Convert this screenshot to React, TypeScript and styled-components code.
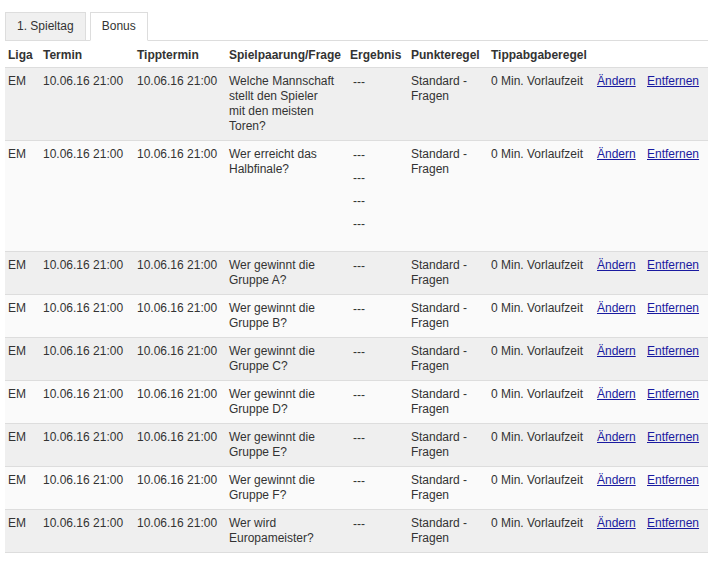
import styled, { createGlobalStyle } from 'styled-components';

const GlobalStyle = createGlobalStyle`
    body {
        margin: 0;
        background: #fff;
        font-family: "Liberation Sans", Arial, sans-serif;
        font-size: 12px;
        color: #333;
    }
`

const Page = styled.div`
    padding: 12px 0 0 5px;
    width: 703px;
`

const TabBar = styled.div`
    display: flex;
    gap: 4px;
    border-bottom: 1px solid #ddd;
`

const Tab = styled.div<{ $active?: boolean }>`
    line-height: 27px;
    padding: 0 11px;
    border: 1px solid #ddd;
    margin-bottom: -1px;
    background: ${p => p.$active ? '#fff' : '#f0f0f0'};
    border-bottom-color: ${p => p.$active ? '#fff' : '#ddd'};
    cursor: pointer;
`

const Table = styled.table`
    width: 703px;
    table-layout: fixed;
    border-collapse: collapse;
    line-height: 15px;
`

const HeadCell = styled.th`
    text-align: left;
    font-weight: bold;
    padding: 7px 3px 4px;
    white-space: nowrap;
    border-bottom: 1px solid #ddd;
`

const Row = styled.tr<{ $odd: boolean }>`
    background: ${p => p.$odd ? '#efefef' : '#fafafa'};
    border-bottom: 1px solid #ddd;
`

const Cell = styled.td<{ $nowrap?: boolean; $padRight?: number }>`
    vertical-align: top;
    padding: 6px ${p => p.$padRight ?? 3}px 6px 3px;
    white-space: ${p => p.$nowrap ? 'nowrap' : 'normal'};
`

const Results = styled.div<{ $multi: boolean }>`
    padding: 1px 0 ${p => p.$multi ? '5px' : '0'} 3px;
`

const Dash = styled.div<{ $gap: boolean }>`
    margin-bottom: ${p => p.$gap ? '8px' : '0'};
`

const Link = styled.a`
    color: #1a1aa0;
    text-decoration: underline;
    cursor: pointer;
`

const widths = [35, 94, 92, 121, 61, 80, 106, 50, 64];
const headers = ['Liga', 'Termin', 'Tipptermin', 'Spielpaarung/Frage', 'Ergebnis', 'Punkteregel', 'Tippabgaberegel', '', ''];

const questions = [
    { frage: 'Welche Mannschaft stellt den Spieler mit den meisten Toren?', antworten: 1 },
    { frage: 'Wer erreicht das Halbfinale?', antworten: 4 },
    { frage: 'Wer gewinnt die Gruppe A?', antworten: 1 },
    { frage: 'Wer gewinnt die Gruppe B?', antworten: 1 },
    { frage: 'Wer gewinnt die Gruppe C?', antworten: 1 },
    { frage: 'Wer gewinnt die Gruppe D?', antworten: 1 },
    { frage: 'Wer gewinnt die Gruppe E?', antworten: 1 },
    { frage: 'Wer gewinnt die Gruppe F?', antworten: 1 },
    { frage: 'Wer wird Europameister?', antworten: 1 },
];

const App = () => {
    return (
        <>
            <GlobalStyle />
            <Page>
                <TabBar>
                    <Tab>1. Spieltag</Tab>
                    <Tab $active>Bonus</Tab>
                </TabBar>
                <Table>
                    <colgroup>
                        {widths.map((w, i) => <col key={i} style={{ width: w }} />)}
                    </colgroup>
                    <thead>
                        <tr>
                            {headers.map((h, i) => <HeadCell key={i}>{h}</HeadCell>)}
                        </tr>
                    </thead>
                    <tbody>
                        {questions.map((q, i) => (
                            <Row key={i} $odd={i % 2 === 0}>
                                <Cell $nowrap>EM</Cell>
                                <Cell $nowrap>10.06.16 21:00</Cell>
                                <Cell $nowrap>10.06.16 21:00</Cell>
                                <Cell $padRight={11}>{q.frage}</Cell>
                                <Cell>
                                    <Results $multi={q.antworten > 1}>
                                        {Array.from({ length: q.antworten }).map((_, j) => (
                                            <Dash key={j} $gap={q.antworten > 1}>---</Dash>
                                        ))}
                                    </Results>
                                </Cell>
                                <Cell>Standard - Fragen</Cell>
                                <Cell $nowrap>0 Min. Vorlaufzeit</Cell>
                                <Cell $nowrap><Link>Ändern</Link></Cell>
                                <Cell $nowrap><Link>Entfernen</Link></Cell>
                            </Row>
                        ))}
                    </tbody>
                </Table>
            </Page>
        </>
    )
}

export default App;
